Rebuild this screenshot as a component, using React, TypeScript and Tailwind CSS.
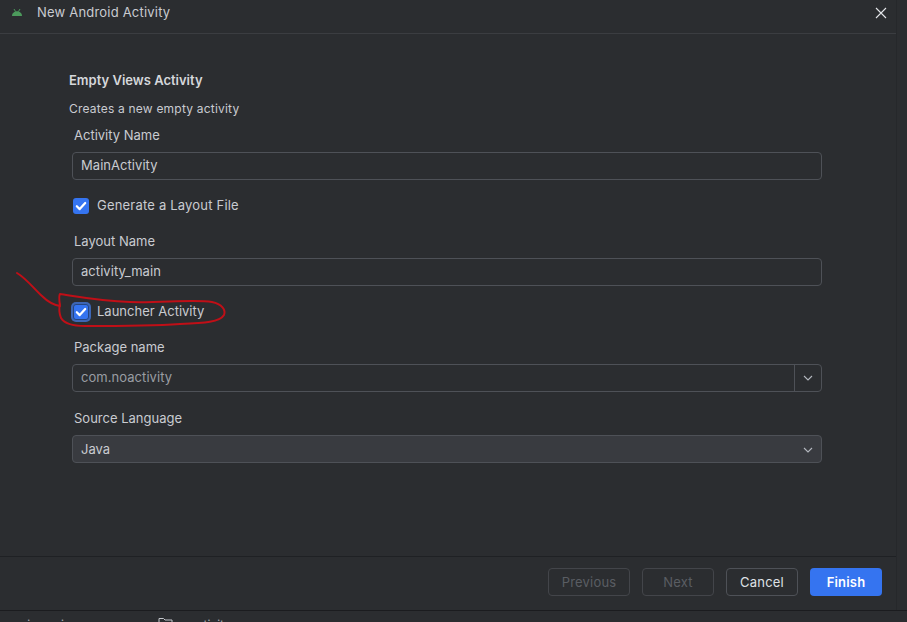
const fontStack = { fontFamily: 'Inter, "Noto Sans", sans-serif' }

function Check() {
  return (
    <svg className="shrink-0" width="16" height="16" viewBox="0 0 16 16" fill="none">
      <path d="M3.800 8.200l2.900 2.900L12.200 5" stroke="#ffffff" strokeWidth="2.200" strokeLinecap="round" strokeLinejoin="round" />
    </svg>
  )
}

function Chevron() {
  return (
    <svg width="10" height="6" viewBox="0 0 10 6" fill="none">
      <path d="M1 1l4 4 4-4" stroke="#b4b8bf" strokeWidth="1.100" />
    </svg>
  )
}

function FieldLabel({ children, className }: { children: string; className: string }) {
  return <div className={`pl-[2px] h-[20px] leading-[20px] text-[13px] text-[#c9cbd0] ${className}`}>{children}</div>
}

function Input({ value, className }: { value: string; className: string }) {
  return (
    <div className={`w-[750px] h-[28px] flex items-center px-[8px] rounded-[4px] border border-[#4e5157] text-[13px] tracking-[0.05px] text-[#c9cbd0] ${className}`}>
      {value}
    </div>
  )
}

function CheckRow({ label, focused, className }: { label: string; focused?: boolean; className: string }) {
  return (
    <div className={`flex items-center h-[16px] pl-[1px] ${className}`}>
      <div className={`w-[16px] h-[16px] rounded-[3px] bg-[#3574f0] flex items-center justify-center ${focused ? 'ring-2 ring-[#3d66b5] border border-[#26457f]' : ''}`}>
        <Check />
      </div>
      <span className="ml-[8px] text-[13px] text-[#c9cbd0]">{label}</span>
    </div>
  )
}

function FooterButton({ label, variant, className }: { label: string; variant: 'off' | 'normal' | 'primary'; className: string }) {
  const look = {
    off: 'border border-[#43454a] text-[#5a5d63]',
    normal: 'border border-[#4e5157] text-[#dfe1e5]',
    primary: 'bg-[#3574f0] text-white font-semibold',
  }[variant]
  return (
    <div className={`h-[28px] pt-[1px] flex items-center justify-center rounded-[4px] text-[13px] tracking-[0.2px] ${look} ${className}`}>
      {label}
    </div>
  )
}

export default function App() {
  return (
    <div className="relative w-[907px] h-[622px] overflow-hidden bg-[#2b2d30] flex flex-col" style={fontStack}>
      <div className="flex flex-1 min-h-0">
        <div className="w-[897px] flex flex-col border-r border-[#26282b]">
          {/* Title bar */}
          <div className="h-[34px] shrink-0 flex items-start pt-[2px] border-b border-[#3b3d41]">
            <svg className="ml-[11px] mt-[6px]" width="12" height="9" viewBox="0 0 12 9" fill="#4c9a5c">
              <path d="M1 8c0-2.600 2.200-4.700 5-4.700S11 5.400 11 8z" />
              <path d="M3 1l1.500 2.500M9 1L7.500 3.500" stroke="#4c9a5c" strokeWidth="1" />
            </svg>
            <span className="ml-[14px] h-[20px] leading-[20px] text-[13px] tracking-[0.2px] text-[#c9cbd0]">New Android Activity</span>
            <svg className="ml-auto mr-[9px] mt-[5px]" width="12" height="12" viewBox="0 0 12 12" fill="none">
              <path d="M1 1l10 10M11 1L1 11" stroke="#e4e6ea" strokeWidth="1.100" />
            </svg>
          </div>

          {/* Form */}
          <div className="flex-1 min-h-0 pl-[69px]">
            <div className="pt-[37px] h-[56px] leading-[18px] text-[13px] font-semibold text-[#d5d7db]">Empty Views Activity</div>
            <div className="mt-[10px] h-[18px] leading-[18px] text-[12px] tracking-[0.2px] text-[#c9cbd0]">Creates a new empty activity</div>
            <div className="pl-[3px]">
              <FieldLabel className="mt-[7px]">Activity Name</FieldLabel>
              <Input value="MainActivity" className="mt-[7px]" />
              <CheckRow label="Generate a Layout File" className="mt-[18px] tracking-[0.2px]" />
              <FieldLabel className="mt-[17px]">Layout Name</FieldLabel>
              <Input value="activity_main" className="mt-[7px]" />
              <CheckRow label="Launcher Activity" focused className="mt-[18px]" />
              <FieldLabel className="mt-[17px]">Package name</FieldLabel>
              <div className="mt-[7px] w-[750px] h-[28px] flex items-center rounded-[4px] border border-[#4e5157] text-[13px] tracking-[0.05px] text-[#9a9da3]">
                <span className="flex-1 px-[8px]">com.noactivity</span>
                <div className="w-[27px] h-full flex items-center justify-center border-l border-[#4e5157]">
                  <Chevron />
                </div>
              </div>
              <FieldLabel className="mt-[16px]">Source Language</FieldLabel>
              <div className="mt-[7px] w-[750px] h-[28px] pt-[1px] flex items-center justify-between px-[8px] rounded-[4px] border border-[#4e5157] bg-[#393b40] text-[13px] text-[#c9cbd0]">
                <span>Java</span>
                <Chevron />
              </div>
            </div>
          </div>

          {/* Footer */}
          <div className="h-[54px] shrink-0 border-t border-[#1f2124] flex items-start justify-end pt-[11px] pr-[14px]">
            <FooterButton label="Previous" variant="off" className="w-[82px]" />
            <FooterButton label="Next" variant="off" className="w-[72px] ml-[12px]" />
            <FooterButton label="Cancel" variant="normal" className="w-[72px] ml-[12px]" />
            <FooterButton label="Finish" variant="primary" className="w-[72px] ml-[12px]" />
          </div>
        </div>
      </div>

      {/* Strip of the window behind, clipped at the bottom */}
      <div className="h-[12px] shrink-0 border-t border-[#1b1c1f] flex items-start overflow-hidden text-[12px] leading-[16px] text-[#a9acb2]">
        <span className="ml-[10px] mt-[6px]">main</span>
        <span className="ml-[7px] mt-[6px]">›</span>
        <span className="ml-[12px] mt-[6px]">java</span>
        <span className="ml-[8px] mt-[6px]">›</span>
        <span className="ml-[12px] mt-[6px]">com</span>
        <span className="ml-[9px] mt-[6px]">›</span>
        <svg className="ml-[11px] mt-[6px]" width="15" height="12" viewBox="0 0 15 12" fill="none">
          <path d="M1 3V1.500h4.500L7 3h7v8H1z" stroke="#c4c7cc" strokeWidth="1" />
        </svg>
        <span className="ml-[3px] mt-[6px]">noactivity</span>
      </div>

      {/* Hand-drawn red annotation */}
      <svg className="absolute left-0 top-0 pointer-events-none" width="907" height="622" fill="none">
        <path
          d="M17 273C27 279 35 290 42 296C47 301 54 305 60 306C59 299 59 295 60 294C74 296 100 301 130 302C160 303 195 299 212 302C222 304 226 310 224 315C220 322 205 323 180 324C150 326 110 326 85 326C72 326 64 323 61 318C59 313 59 308 60 304"
          stroke="#c00f17"
          strokeWidth="2"
          strokeLinecap="round"
          strokeLinejoin="round"
        />
      </svg>
    </div>
  )
}
